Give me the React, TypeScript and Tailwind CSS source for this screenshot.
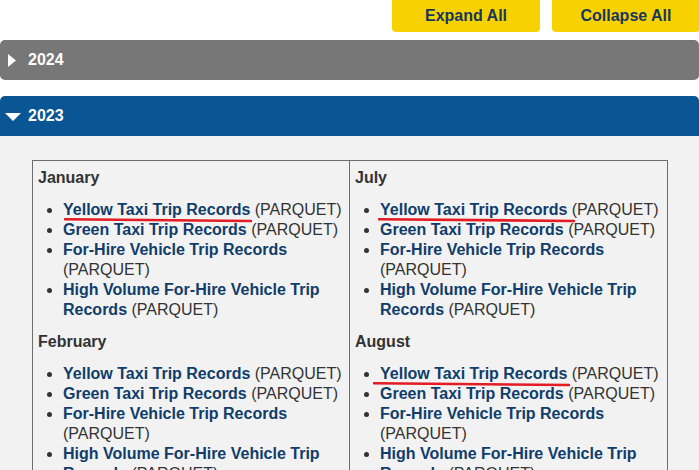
import React from "react";

type Month = { name: string };

const left: Month[] = ["January", "February", "March", "April", "May", "June"].map((name) => ({ name }));
const right: Month[] = ["July", "August", "September", "October", "November", "December"].map((name) => ({ name }));

const records = [
  "Yellow Taxi Trip Records",
  "Green Taxi Trip Records",
  "For-Hire Vehicle Trip Records",
  "High Volume For-Hire Vehicle Trip Records",
];

// hand drawn red marks under some of the yellow taxi links
const marks: Record<string, { left: number; width: number }> = {
  January: { left: 1, width: 188 },
  July: { left: -2, width: 197 },
  August: { left: -7, width: 197 },
};

function Mark({ left, width }: { left: number; width: number }) {
  return (
    <svg
      className="absolute top-[16px] pointer-events-none"
      style={{ left, width }}
      height={6}
      viewBox={`0 0 ${width} 6`}
      preserveAspectRatio="none"
    >
      <path
        d={`M1 2.2 Q ${width / 2} 3.2 ${width - 1} 4`}
        stroke="#e41b23"
        strokeWidth={2.6}
        strokeLinecap="round"
        fill="none"
      />
    </svg>
  );
}

function MonthBlock({ month }: { month: Month }) {
  const mark = marks[month.name];
  return (
    <div className="mb-[12px]">
      <h3 className="text-[16px] leading-[20px] font-bold text-[#333] mb-[12px]">{month.name}</h3>
      <ul className="list-disc pl-[25px] text-[16px] leading-[20px] text-[#333]">
        {records.map((r, i) => (
          <li key={r}>
            <span className="relative">
              <a className="font-bold text-[#103d6b]">{r}</a>
              {i === 0 && mark && <Mark left={mark.left} width={mark.width} />}
            </span>{" "}
            (PARQUET)
          </li>
        ))}
      </ul>
    </div>
  );
}

export default function App() {
  return (
    <div className="w-[699px] h-[470px] overflow-hidden bg-white font-['Liberation_Sans',Arial,sans-serif]">
      <div className="flex justify-end gap-3 h-8 -mr-px">
        <button className="w-[148px] h-8 rounded-b-[4px] bg-[#f7d200] text-[16px] font-bold text-[#17375e]">
          Expand All
        </button>
        <button className="w-[148px] h-8 rounded-b-[4px] bg-[#f7d200] text-[16px] font-bold text-[#17375e]">
          Collapse All
        </button>
      </div>

      <div className="mt-2 h-10 rounded-[5px] bg-[#777777] flex items-center pl-2 text-white font-bold text-[16px]">
        <svg width="8" height="13" viewBox="0 0 8 13" className="mt-px">
          <path d="M0 0 L8 6.5 L0 13 Z" fill="white" />
        </svg>
        <span className="ml-3">2024</span>
      </div>

      <div className="mt-4 h-10 rounded-t-[5px] bg-[#0a5694] flex items-center pl-[5px] text-white font-bold text-[16px]">
        <svg width="16" height="8" viewBox="0 0 16 8" className="mt-px">
          <path d="M0 0 L16 0 L8 8 Z" fill="white" />
        </svg>
        <span className="ml-[7px]">2023</span>
      </div>

      <div className="bg-[#f2f2f2] pl-8 pt-6 pb-6">
        <div className="grid grid-cols-[316px_318px] w-[636px] border border-[#6e6e6e]">
          <div className="pl-[5px] pr-[4px] pt-[7px]">
            {left.map((m) => (
              <MonthBlock key={m.name} month={m} />
            ))}
          </div>
          <div className="border-l border-[#6e6e6e] pl-[5px] pr-[4px] pt-[7px]">
            {right.map((m) => (
              <MonthBlock key={m.name} month={m} />
            ))}
          </div>
        </div>
      </div>
    </div>
  );
}
